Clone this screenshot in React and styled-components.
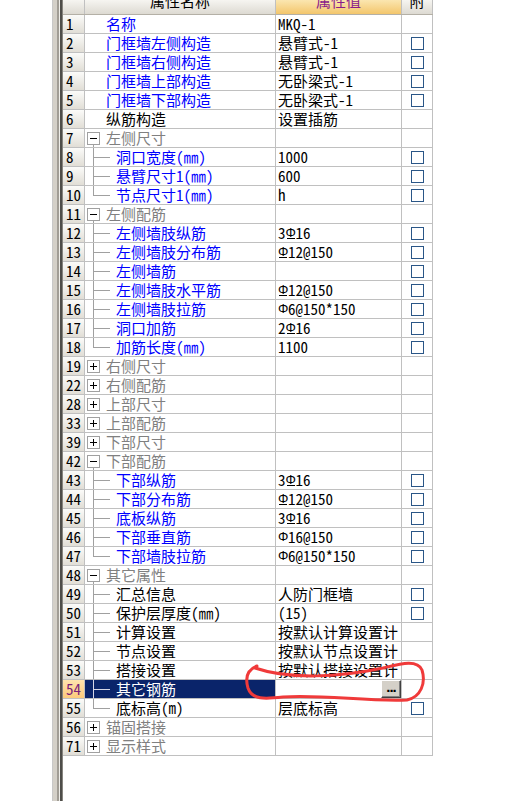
import React from 'react';
import styled, { createGlobalStyle, css } from 'styled-components';

const GlobalStyle = createGlobalStyle`
  html, body {
    margin: 0;
    padding: 0;
    background: #fff;
  }
  body {
    font-family: "Noto Sans Mono CJK SC", "Noto Sans CJK SC", "Liberation Mono", monospace;
  }
`;

const COLS = '22px 191px 126px 31px';
const LINE = '#c0c0c0';

// property rows; {A} = HPB300 mark, {B} = HRB335 mark
const rows = [
  { n: 1, name: '名称', tone: 'link', value: 'MKQ-1' },
  { n: 2, name: '门框墙左侧构造', tone: 'link', value: '悬臂式-1', check: true },
  { n: 3, name: '门框墙右侧构造', tone: 'link', value: '悬臂式-1', check: true },
  { n: 4, name: '门框墙上部构造', tone: 'link', value: '无卧梁式-1', check: true },
  { n: 5, name: '门框墙下部构造', tone: 'link', value: '无卧梁式-1', check: true },
  { n: 6, name: '纵筋构造', tone: 'plain', value: '设置插筋' },
  { n: 7, name: '左侧尺寸', group: 'open' },
  { n: 8, name: '洞口宽度(㎜)', tone: 'link', branch: 'mid', value: '1000', check: true },
  { n: 9, name: '悬臂尺寸1(㎜)', tone: 'link', branch: 'mid', value: '600', check: true },
  { n: 10, name: '节点尺寸1(㎜)', tone: 'link', branch: 'last', value: 'h', check: true },
  { n: 11, name: '左侧配筋', group: 'open' },
  { n: 12, name: '左侧墙肢纵筋', tone: 'link', branch: 'mid', value: '3{B}16', check: true },
  { n: 13, name: '左侧墙肢分布筋', tone: 'link', branch: 'mid', value: '{B}12@150', check: true },
  { n: 14, name: '左侧墙筋', tone: 'link', branch: 'mid', value: '', check: true },
  { n: 15, name: '左侧墙肢水平筋', tone: 'link', branch: 'mid', value: '{B}12@150', check: true },
  { n: 16, name: '左侧墙肢拉筋', tone: 'link', branch: 'mid', value: '{A}6@150*150', check: true },
  { n: 17, name: '洞口加筋', tone: 'link', branch: 'mid', value: '2{B}16', check: true },
  { n: 18, name: '加筋长度(㎜)', tone: 'link', branch: 'last', value: '1100', check: true },
  { n: 19, name: '右侧尺寸', group: 'closed' },
  { n: 22, name: '右侧配筋', group: 'closed' },
  { n: 28, name: '上部尺寸', group: 'closed' },
  { n: 33, name: '上部配筋', group: 'closed' },
  { n: 39, name: '下部尺寸', group: 'closed' },
  { n: 42, name: '下部配筋', group: 'open' },
  { n: 43, name: '下部纵筋', tone: 'link', branch: 'mid', value: '3{B}16', check: true },
  { n: 44, name: '下部分布筋', tone: 'link', branch: 'mid', value: '{B}12@150', check: true },
  { n: 45, name: '底板纵筋', tone: 'link', branch: 'mid', value: '3{B}16', check: true },
  { n: 46, name: '下部垂直筋', tone: 'link', branch: 'mid', value: '{A}16@150', check: true },
  { n: 47, name: '下部墙肢拉筋', tone: 'link', branch: 'last', value: '{A}6@150*150', check: true },
  { n: 48, name: '其它属性', group: 'open' },
  { n: 49, name: '汇总信息', tone: 'plain', branch: 'mid', value: '人防门框墙', check: true },
  { n: 50, name: '保护层厚度(㎜)', tone: 'plain', branch: 'mid', value: '(15)', check: true },
  { n: 51, name: '计算设置', tone: 'plain', branch: 'mid', value: '按默认计算设置计' },
  { n: 52, name: '节点设置', tone: 'plain', branch: 'mid', value: '按默认节点设置计' },
  { n: 53, name: '搭接设置', tone: 'plain', branch: 'mid', value: '按默认搭接设置计' },
  { n: 54, name: '其它钢筋', tone: 'plain', branch: 'mid', editing: true, selected: true },
  { n: 55, name: '底标高(m)', tone: 'plain', branch: 'last', value: '层底标高', check: true },
  { n: 56, name: '锚固搭接', group: 'closed' },
  { n: 71, name: '显示样式', group: 'closed' },
];

const Page = styled.div`
  position: relative;
  display: flex;
  width: 506px;
  height: 801px;
  overflow: hidden;
  background: #fff;
`;

const Blank = styled.div`
  width: 52px;
  flex: none;
`;

const Splitter = styled.div`
  width: 11px;
  flex: none;
  background: linear-gradient(
    to right,
    #c8c8c8 0 1px,
    #d4d0c8 1px 5px,
    #a19d95 5px 7px,
    #efeee9 7px 8px,
    #4e4d49 8px 10px,
    #86847e 10px 11px
  );
`;

const Sheet = styled.div`
  display: flex;
  flex-direction: column;
  align-self: flex-start;
  width: 370px;
`;

const Row = styled.div`
  display: grid;
  grid-template-columns: ${COLS};
  height: 19px;
  box-sizing: border-box;
  border-bottom: 1px solid ${LINE};
  font-size: 15px;
  line-height: 18px;
`;

const HeadRow = styled(Row)`
  height: 15px;
  border-bottom-color: #b4b0a6;
`;

const HeadCell = styled.div`
  display: flex;
  justify-content: center;
  align-items: flex-start;
  overflow: hidden;
  border-right: 1px solid ${LINE};
  background: ${(p) =>
    p.$tone === 'gold'
      ? 'linear-gradient(#fbe6b0, #f3c66c)'
      : 'linear-gradient(#f6f5f1, #dddad2)'};
  color: ${(p) => (p.$tone === 'gold' ? '#8a1c8a' : '#000')};
`;

const HeadLabel = styled.span`
  margin-top: -8px;
  line-height: 18px;
  white-space: nowrap;
`;

const NumCell = styled.div`
  padding-left: 3px;
  border-right: 1px solid ${LINE};
  background: ${(p) =>
    p.$active
      ? 'linear-gradient(#ffe4ae, #fcca7c)'
      : 'linear-gradient(#fbfbf9, #e1ded6)'};
  color: ${(p) => (p.$active ? '#7a1f7a' : '#000')};
`;

const toneColor = {
  link: '#0000ff',
  plain: '#000',
  group: '#808080',
};

const NameCell = styled.div`
  position: relative;
  display: flex;
  align-items: center;
  padding-left: ${(p) => p.$indent}px;
  overflow: hidden;
  white-space: nowrap;
  border-right: 1px solid ${LINE};
  background: ${(p) => (p.$selected ? '#0a246a' : '#fff')};
  color: ${(p) => (p.$selected ? '#fff' : toneColor[p.$tone])};
`;

// tree connector: vertical rail plus a horizontal tick to the label
const Branch = styled.span`
  position: absolute;
  left: 8px;
  top: 0;
  bottom: 0;
  width: 17px;
  pointer-events: none;

  &::before {
    content: '';
    position: absolute;
    left: 0;
    top: 0;
    width: 1px;
    height: ${(p) => (p.$last ? '50%' : '100%')};
    background: ${(p) => (p.$light ? '#d6d6e6' : '#a0a0a0')};
  }
  &::after {
    content: '';
    position: absolute;
    left: 0;
    top: 50%;
    width: 17px;
    height: 1px;
    background: ${(p) => (p.$light ? '#d6d6e6' : '#a0a0a0')};
  }
`;

// rail leaving an expanded group box downwards
const Stub = styled.span`
  position: absolute;
  left: 8px;
  top: calc(50% + 7px);
  bottom: 0;
  width: 1px;
  background: #a0a0a0;
`;

const Toggle = styled.span`
  position: relative;
  flex: none;
  width: 13px;
  height: 13px;
  box-sizing: border-box;
  margin-right: 6px;
  border: 1px solid #a0a0a0;
  background: #fff;

  &::before {
    content: '';
    position: absolute;
    left: 2px;
    top: 5px;
    width: 7px;
    height: 1px;
    background: #000;
  }
  ${(p) =>
    p.$closed &&
    css`
      &::after {
        content: '';
        position: absolute;
        left: 5px;
        top: 2px;
        width: 1px;
        height: 7px;
        background: #000;
      }
    `}
`;

const ValueCell = styled.div`
  display: flex;
  align-items: center;
  padding-left: 2px;
  overflow: hidden;
  white-space: nowrap;
  border-right: 1px solid ${LINE};
  color: #000;
  ${(p) =>
    p.$editing &&
    css`
      justify-content: flex-end;
      padding-left: 0;
    `}
`;

const EllipsisButton = styled.button`
  width: 20px;
  height: 18px;
  box-sizing: border-box;
  padding: 0 0 5px;
  border: 1px solid;
  border-color: #fff #404040 #404040 #fff;
  box-shadow: inset -1px -1px 0 #808080;
  background: #d4d0c8;
  color: #000;
  font-family: "Liberation Sans", sans-serif;
  font-size: 15px;
  font-weight: bold;
  line-height: 10px;
  letter-spacing: -1px;
`;

const RebarMark = styled.span`
  position: relative;
  display: inline-block;
  width: 10px;
  text-align: center;
  font-family: "Liberation Sans", sans-serif;
  font-size: 13px;
  ${(p) =>
    p.$grade === 'B' &&
    css`
      &::after {
        content: '';
        position: absolute;
        left: 1px;
        right: 1px;
        bottom: 3px;
        height: 1px;
        background: currentColor;
      }
    `}
`;

const AttachCell = styled.div`
  display: flex;
  align-items: center;
  justify-content: center;
  border-right: 1px solid ${LINE};
`;

const CheckBox = styled.span`
  width: 13px;
  height: 13px;
  box-sizing: border-box;
  margin-left: 1px;
  border: 1px solid #2a5687;
  background: #fff;
`;

const Scribble = styled.svg`
  position: absolute;
  left: 0;
  top: 0;
  pointer-events: none;
`;

function renderValue(text) {
  return text.split(/(\{[AB]\})/).map((part, i) => {
    const m = part.match(/^\{([AB])\}$/);
    if (m) return <RebarMark key={i} $grade={m[1]}>Φ</RebarMark>;
    return <React.Fragment key={i}>{part}</React.Fragment>;
  });
}

function NameColumn({ row }) {
  if (row.group) {
    return (
      <NameCell $indent={2} $tone="group">
        <Toggle $closed={row.group === 'closed'} />
        {row.group === 'open' && <Stub />}
        {row.name}
      </NameCell>
    );
  }
  const nested = !!row.branch;
  return (
    <NameCell $indent={nested ? 31 : 21} $tone={row.tone} $selected={row.selected}>
      {nested && <Branch $last={row.branch === 'last'} $light={row.selected} />}
      {row.name}
    </NameCell>
  );
}

export default function App() {
  return (
    <Page>
      <GlobalStyle />
      <Blank />
      <Splitter />
      <Sheet>
        <HeadRow>
          <HeadCell />
          <HeadCell>
            <HeadLabel>属性名称</HeadLabel>
          </HeadCell>
          <HeadCell $tone="gold">
            <HeadLabel>属性值</HeadLabel>
          </HeadCell>
          <HeadCell>
            <HeadLabel>附</HeadLabel>
          </HeadCell>
        </HeadRow>
        {rows.map((row) => (
          <Row key={row.n}>
            <NumCell $active={row.selected}>{row.n}</NumCell>
            <NameColumn row={row} />
            <ValueCell $editing={row.editing}>
              {row.editing ? <EllipsisButton>...</EllipsisButton> : renderValue(row.value || '')}
            </ValueCell>
            <AttachCell>{row.check && <CheckBox />}</AttachCell>
          </Row>
        ))}
      </Sheet>
      <Scribble width="506" height="801" viewBox="0 0 506 801">
        <path
          d="M255 668 C290 680 340 677 383 668 C400 664 417 659 422 670 C426 683 421 697 407 700 C370 702 320 694 283 697 C265 699 252 700 248 688 C245 678 247 670 257 666"
          fill="none"
          stroke="#f03a3a"
          strokeWidth="3"
          strokeLinecap="round"
          strokeLinejoin="round"
        />
      </Scribble>
    </Page>
  );
}
